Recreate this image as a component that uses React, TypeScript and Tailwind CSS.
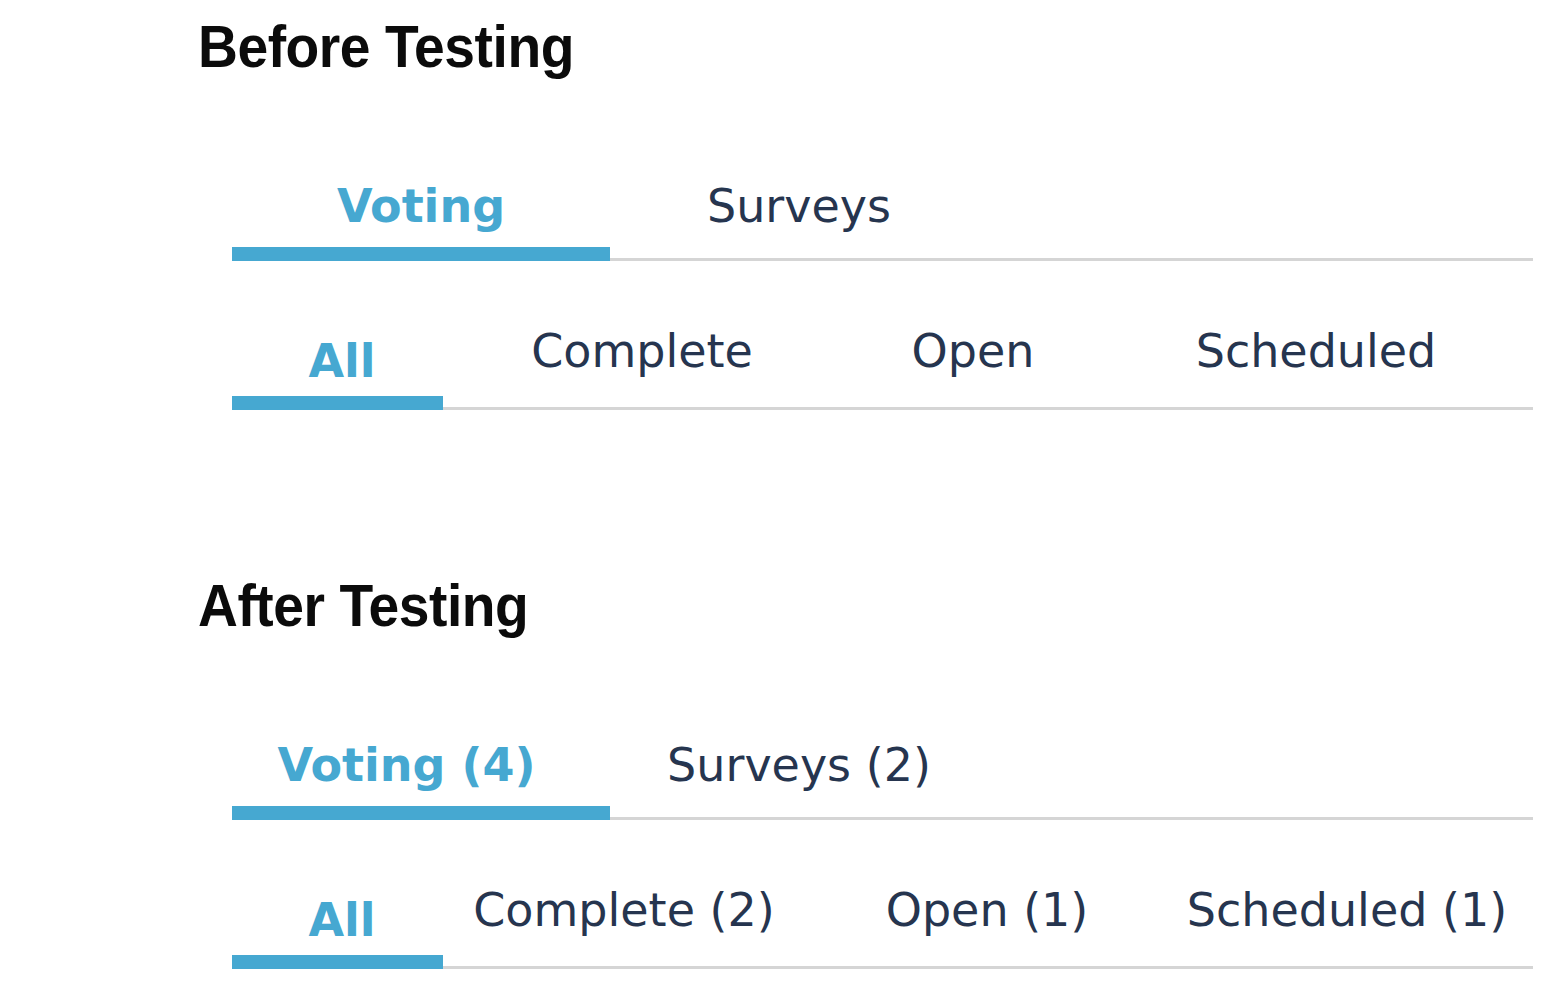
type Tab = { label: string; width: string; active?: boolean; shift?: string };

const tabFont = { fontFamily: '"DejaVu Sans", "Open Sans", sans-serif' };

const topBefore: Tab[] = [
  { label: "Voting", width: "w-[378px]", active: true },
  { label: "Surveys", width: "w-[378px]" },
];

const subBefore: Tab[] = [
  { label: "All", width: "w-[211px]", active: true, shift: "pl-[9px]" },
  { label: "Complete", width: "w-[398px]" },
  { label: "Open", width: "w-[264px]" },
  { label: "Scheduled", width: "w-[422px]" },
];

const topAfter: Tab[] = [
  { label: "Voting (4)", width: "w-[378px]", active: true, shift: "pr-[29px]" },
  { label: "Surveys (2)", width: "w-[378px]" },
];

const subAfter: Tab[] = [
  { label: "All", width: "w-[211px]", active: true, shift: "pl-[9px]" },
  { label: "Complete (2)", width: "w-[362px]" },
  { label: "Open (1)", width: "w-[364px]" },
  { label: "Scheduled (1)", width: "w-[356px]" },
];

function TabRow({ tabs, lowActive }: { tabs: Tab[]; lowActive?: boolean }) {
  return (
    <div className="flex items-end w-[1301px] border-b-[3px] border-[#d5d5d5]" style={tabFont}>
      {tabs.map((t) => (
        <div key={t.label} className={`${t.width} flex flex-col shrink-0`}>
          <div
            className={`text-center whitespace-nowrap text-[46px] leading-[46px] ${t.shift ?? ""} ${
              t.active ? "font-bold text-[#46a8d1]" : "text-[#26354f]"
            } ${lowActive && t.active ? "pb-[12px]" : "pb-[18px]"} ${lowActive && !t.active ? "pb-[22px]" : ""}`}
          >
            {t.label}
          </div>
          <div className={`h-[14px] -mb-[3px] ${t.active ? "bg-[#46a8d1]" : "bg-transparent"}`} />
        </div>
      ))}
    </div>
  );
}

function Heading({ children }: { children: string }) {
  return (
    <div className="pl-[198px]">
      <h2
        className="origin-left scale-x-[0.92] text-[60px] leading-[60px] font-bold text-[#0b0b0b] tracking-[-0.5px] whitespace-nowrap"
        style={{ fontFamily: '"Liberation Sans", Arial, sans-serif' }}
      >
        {children}
      </h2>
    </div>
  );
}

export default function App() {
  return (
    <div className="w-[1557px] h-[985px] bg-white overflow-hidden pt-[17px]">
      <Heading>Before Testing</Heading>
      <div className="pl-[232px] pt-[106px]">
        <TabRow tabs={topBefore} />
      </div>
      <div className="pl-[232px] pt-[67px]">
        <TabRow tabs={subBefore} lowActive />
      </div>

      <div className="pt-[166px]">
        <Heading>After Testing</Heading>
      </div>
      <div className="pl-[232px] pt-[106px]">
        <TabRow tabs={topAfter} />
      </div>
      <div className="pl-[232px] pt-[67px]">
        <TabRow tabs={subAfter} lowActive />
      </div>
    </div>
  );
}
